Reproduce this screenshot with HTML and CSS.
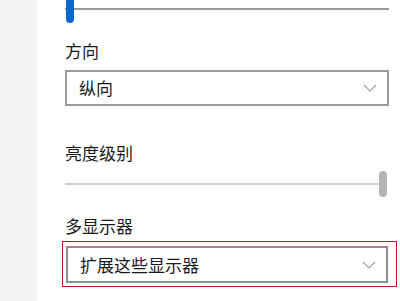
FILE: index.html
```html
<!DOCTYPE html>
<html lang="zh">
<head>
<meta charset="utf-8">
<link rel="stylesheet" href="styles.css">
</head>
<body>
<div class="page">
  <aside class="sidebar"></aside>
  <main class="main">
    <div class="slider slider-top">
      <div class="track dark"></div>
      <div class="thumb blue"></div>
    </div>
    <div class="label label-dir">方向</div>
    <div class="select">
      <span class="select-text">纵向</span>
      <svg class="chev" width="14" height="8" viewBox="0 0 14 8"><path d="M1 1 L7 7 L13 1" fill="none" stroke="#a3a3a3" stroke-width="1.2"/></svg>
    </div>
    <div class="label label-bright">亮度级别</div>
    <div class="slider slider-bright">
      <div class="track light"></div>
      <div class="thumb grey"></div>
    </div>
    <div class="label label-multi">多显示器</div>
    <div class="highlight">
      <div class="select select-inner">
        <span class="select-text">扩展这些显示器</span>
        <svg class="chev" width="14" height="8" viewBox="0 0 14 8"><path d="M1 1 L7 7 L13 1" fill="none" stroke="#a3a3a3" stroke-width="1.2"/></svg>
      </div>
    </div>
  </main>
</div>
</body>
</html>
```
FILE: styles.css
```css
* { box-sizing: border-box; }
html, body { margin: 0; padding: 0; background: #fff; }
body {
  width: 400px;
  height: 301px;
  overflow: hidden;
  font-family: "Noto Sans CJK SC", "Noto Sans", sans-serif;
  color: #1e1e1e;
}
.page { display: flex; height: 301px; }
.sidebar { width: 37px; background: #f2f2f2; flex: none; }
.main {
  flex: 1;
  padding-left: 28px;
  display: flex;
  flex-direction: column;
  align-items: flex-start;
}
.slider { position: relative; width: 324px; }
.slider-top { height: 23px; }
.slider-bright { height: 26px; margin-top: 6px; }
.track { position: absolute; left: 0; right: 0; height: 2px; }
.slider-top .track { top: 8px; }
.slider-bright .track { top: 12px; right: 4px; }
.track.dark { background: #999; }
.track.light { background: #cfcfcf; }
.thumb { position: absolute; width: 8px; border-radius: 4px; }
.thumb.blue { left: 1px; top: -3px; height: 26px; background: #0b67c9; }
.thumb.grey { right: 2px; top: 0; height: 26px; background: #b4b4b4; }
.label { font-size: 17px; line-height: 24px; color: #1a1a1a; }
.label-dir { margin-top: 16px; }
.label-bright { margin-top: 35px; }
.label-multi { margin-top: 17px; }
.select {
  margin-top: 7px;
  width: 324px;
  height: 36px;
  border: 2px solid #9a9a9a;
  display: flex;
  align-items: center;
  justify-content: space-between;
  padding: 0 10px 0 12px;
  font-size: 17px;
}
.select-text { line-height: 24px; color: #1a1a1a; }
.chev { display: block; }
.highlight {
  margin-top: 3px;
  margin-left: -3px;
  width: 335px;
  border: 1px solid #c4161c;
  padding: 4px 7px 3px 3px;
}
.select-inner { margin-top: 0; width: 322px; height: 37px; border-color: #8f8f8f; }
```
